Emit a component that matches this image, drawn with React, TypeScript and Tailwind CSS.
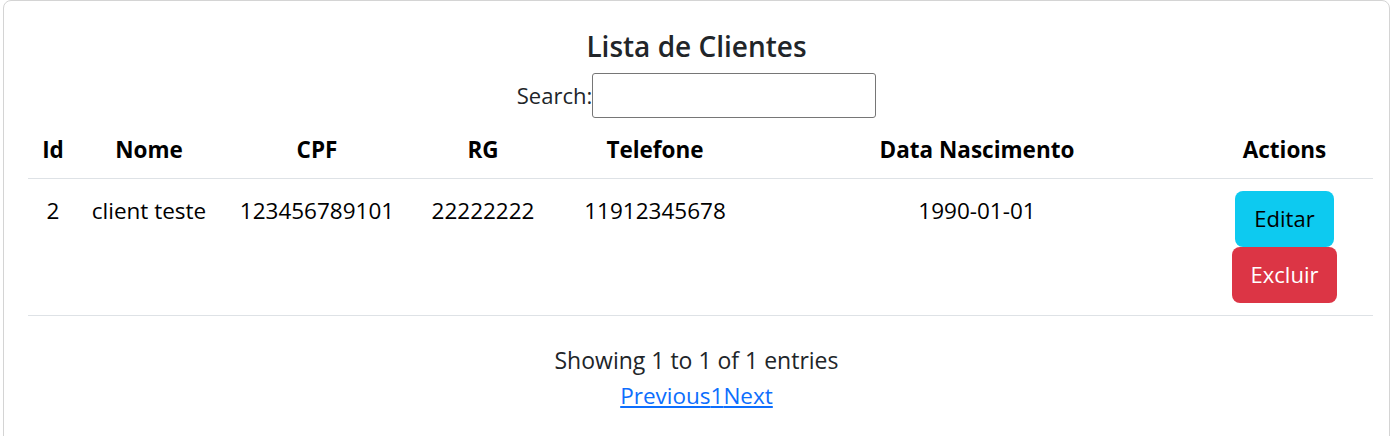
const clients = [
  {
    id: 2,
    nome: 'client teste',
    cpf: '123456789101',
    rg: '22222222',
    telefone: '11912345678',
    dataNascimento: '1990-01-01',
  },
]

const columns = [
  { label: 'Id', w: 'w-[50px]' },
  { label: 'Nome', w: 'w-[142px]' },
  { label: 'CPF', w: 'w-[194px]' },
  { label: 'RG', w: 'w-[138px]' },
  { label: 'Telefone', w: 'w-[206px]' },
  { label: 'Data Nascimento', w: 'w-[438px]' },
  { label: 'Actions', w: 'w-[177px]' },
]

export default function App() {
  return (
    <div className="bg-white px-[3px] font-['Segoe_UI','Open_Sans',sans-serif] text-[#212529]">
      <div className="h-[460px] rounded-lg border border-[#d4d4d4] px-6 pt-[24px]">
        <h2 className="text-center text-[28px] font-semibold leading-[42px]">
          Lista de Clientes
        </h2>
        <div className="mt-[6px] flex items-center justify-center text-[22px]">
          <label htmlFor="search">Search:</label>
          <input
            id="search"
            className="h-[45px] w-[284px] rounded-[3px] border border-[#767676] bg-white"
          />
        </div>
        <table className="mt-[8px] w-[1345px] max-w-none table-fixed border-collapse text-[22.5px] text-black">
          <colgroup>
            {columns.map(c => (
              <col key={c.label} className={c.w} />
            ))}
          </colgroup>
          <thead>
            <tr className="border-b border-[#dee2e6]">
              {columns.map(c => (
                <th
                  key={c.label}
                  className="h-[52px] pb-[3px] text-center font-bold"
                >
                  {c.label}
                </th>
              ))}
            </tr>
          </thead>
          <tbody>
            {clients.map(c => (
              <tr key={c.id} className="border-b border-[#dee2e6]">
                <td className="pt-[15px] text-center align-top">{c.id}</td>
                <td className="pt-[15px] text-center align-top">{c.nome}</td>
                <td className="pt-[15px] text-center align-top">{c.cpf}</td>
                <td className="pt-[15px] text-center align-top">{c.rg}</td>
                <td className="pt-[15px] text-center align-top">{c.telefone}</td>
                <td className="pt-[15px] text-center align-top">
                  {c.dataNascimento}
                </td>
                <td className="pb-[12px] pt-[12px] align-top">
                  <div className="flex flex-col items-center">
                    <button className="h-[56px] w-[99px] rounded-lg bg-[#0dcaf0] text-[22px] text-black">
                      Editar
                    </button>
                    <button className="h-[56px] w-[105px] rounded-lg bg-[#dc3545] text-[22px] text-white">
                      Excluir
                    </button>
                  </div>
                </td>
              </tr>
            ))}
          </tbody>
        </table>
        <div className="mt-[28px] text-center text-[23px] leading-[32px]">
          Showing 1 to 1 of 1 entries
        </div>
        <div className="text-center text-[22.5px] leading-[40px]">
          <a href="#" className="text-[#0d6efd] underline">
            Previous
          </a>
          <a href="#" className="text-[#0d6efd] underline">
            1
          </a>
          <a href="#" className="text-[#0d6efd] underline">
            Next
          </a>
        </div>
      </div>
    </div>
  )
}
